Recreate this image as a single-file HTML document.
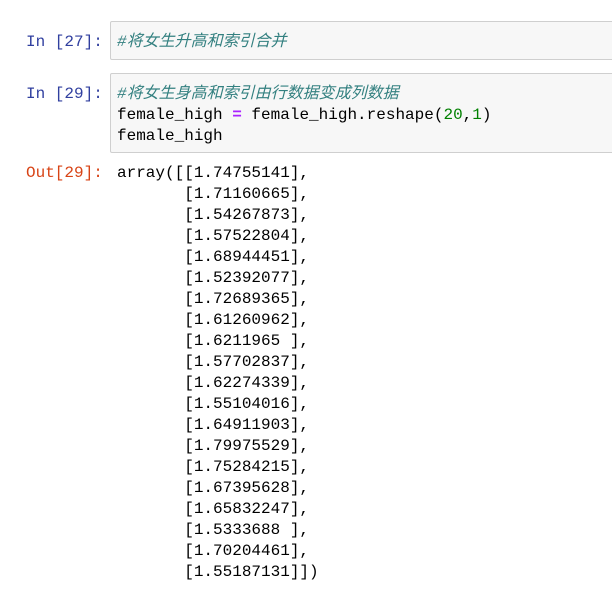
<!DOCTYPE html>
<html><head><meta charset="utf-8"><style>
body{margin:0;background:#fff;width:612px;height:594px;overflow:hidden;position:relative;font-family:"Liberation Mono","Noto Sans CJK SC",monospace;font-size:16px}
.p{position:absolute;white-space:pre;line-height:21px}
.in{color:#303F9F}.out{color:#D84315}
.box{position:absolute;left:110px;width:520px;background:#f7f7f7;border:1px solid #cfcfcf;border-radius:2px}
.c{color:#338080;font-style:italic}
.o{color:#AA22FF;font-weight:bold}.n{color:#008000}
</style></head><body>
<div class="p in" style="left:26px;top:32px">In [27]:</div>
<div class="box" style="top:21px;height:37px"></div>
<div class="p c" style="left:117px;top:32px">#将女生升高和索引合并</div>
<div class="p in" style="left:26px;top:84px">In [29]:</div>
<div class="box" style="top:73px;height:78px"></div>
<div class="p" style="left:117px;top:84px"><span class="c">#将女生身高和索引由行数据变成列数据</span>
female_high <span class="o">=</span> female_high.reshape(<span class="n">20</span>,<span class="n">1</span>)
female_high</div>
<div class="p out" style="left:26px;top:163px">Out[29]:</div>
<div class="p" style="left:117px;top:163px">array([[1.74755141],
       [1.71160665],
       [1.54267873],
       [1.57522804],
       [1.68944451],
       [1.52392077],
       [1.72689365],
       [1.61260962],
       [1.6211965 ],
       [1.57702837],
       [1.62274339],
       [1.55104016],
       [1.64911903],
       [1.79975529],
       [1.75284215],
       [1.67395628],
       [1.65832247],
       [1.5333688 ],
       [1.70204461],
       [1.55187131]])</div>
</body></html>
